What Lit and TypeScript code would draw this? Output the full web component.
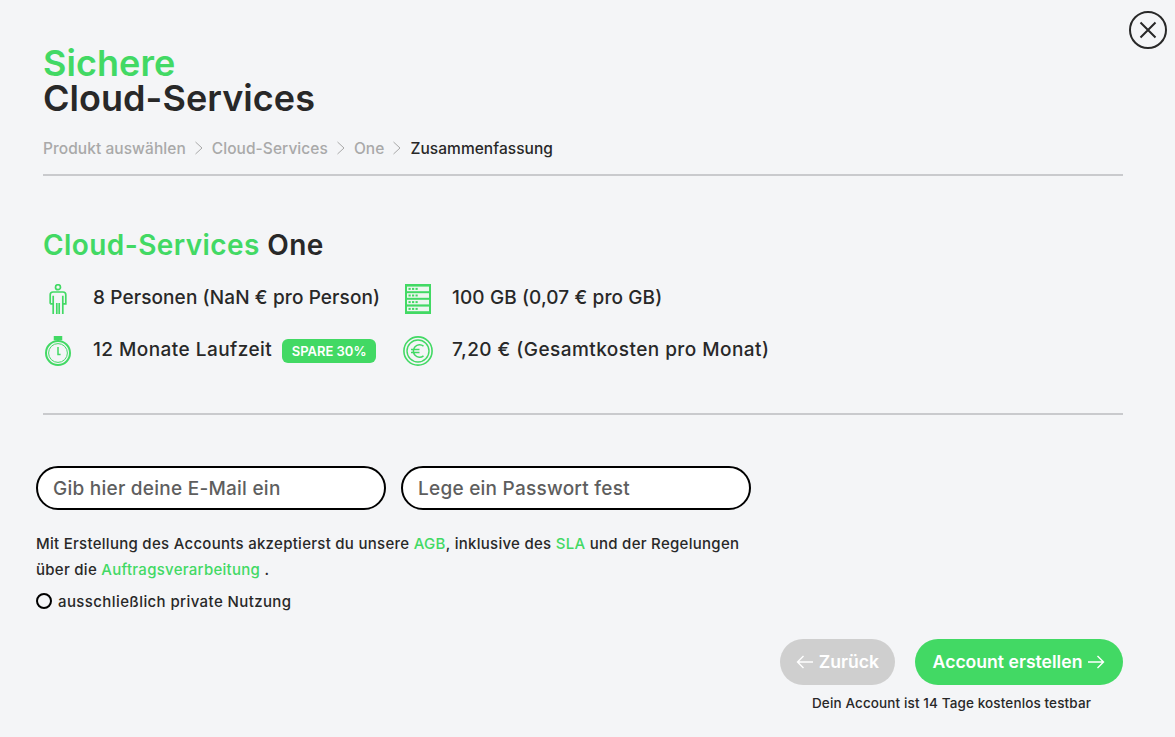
import { LitElement, html, svg, css } from "lit";
import { customElement } from "lit/decorators.js";

@customElement("app-root")
export class AppRoot extends LitElement {
  static styles = css`
    :host { display: block; width: 1175px; height: 737px; background: #f4f5f7; color: #282828; font-family: "Inter", "Noto Sans", sans-serif; overflow: hidden; position: relative; font-weight: 500; }
    .close { position: absolute; left: 1129px; top: 11px; width: 38px; height: 38px; }
    .page { display: flex; flex-direction: column; padding: 46px 52px 0 43px; }
    h1 { margin: 0; font-size: 36px; line-height: 35px; font-weight: 600; letter-spacing: 0.05px; }
    .g { color: #42d964; }
    .crumbs { display: flex; align-items: center; margin-top: 20px; height: 24px; font-size: 15.5px; letter-spacing: 0.06px; color: #a9a9a9; font-weight: 500; }
    .crumbs svg { width: 10px; height: 14px; margin: 0 8px; }
    .crumbs .cur { color: #282828; }
    hr { border: 0; height: 2px; background: #c9cacd; margin: 14px 0 0; width: 1080px; }
    h2 { margin: 51px 0 0; font-size: 28px; line-height: 36px; font-weight: 600; letter-spacing: 0.42px; }
    .facts { display: grid; grid-template-columns: 360px 1fr; row-gap: 16px; margin-top: 16px; font-size: 19px; letter-spacing: 0.11px; height: 88px; }
    .fact { display: flex; align-items: center; height: 36px; }
    .fact.loose { letter-spacing: 0.45px; }
    .fact svg { width: 30px; height: 30px; margin: 4px 20px 0 0; flex: none; }
    .fact.right svg { margin-right: 19px; }
    .badge { margin: 4px 0 0 10px; background: #42d964; color: #fff; font-size: 13px; font-weight: 600; letter-spacing: 0; padding: 0 9.5px; height: 24px; line-height: 24px; border-radius: 6px; }
    .sec { margin-top: 46px; }
    .inputs { display: flex; gap: 15px; margin: 51px 0 0 -7px; }
    .inp { width: 350px; height: 44px; box-sizing: border-box; border: 2px solid #000; border-radius: 22px; background: #fff; padding-left: 15px; font-size: 19px; letter-spacing: 0.25px; color: #5e5e5e; display: flex; align-items: center; }
    .legal { margin: 21px 0 0 -7px; font-size: 15px; letter-spacing: 0.28px; line-height: 26px; }
    .legal a { color: #42d964; }
    .radio { display: flex; align-items: center; gap: 6px; margin: 8px 0 0 -7px; font-size: 15px; letter-spacing: 0.4px; height: 20px; }
    .radio i { width: 12px; height: 12px; border: 2px solid #000; border-radius: 50%; display: block; }
    .foot { align-self: flex-end; display: flex; flex-direction: column; align-items: center; margin-top: 28px; width: 343px; }
    .btns { display: flex; gap: 20px; }
    .btn { height: 46px; box-sizing: border-box; padding-bottom: 1px; border-radius: 23px; color: #fff; font-size: 17.6px; font-weight: 600; display: flex; align-items: center; justify-content: center; gap: 5px; }
    .btn svg { width: 18px; height: 14px; }
    .back { width: 115px; background: #cfcfcf; }
    .go { width: 208px; background: #42d964; }
    .note { font-size: 13.5px; letter-spacing: 0.12px; margin-top: 10px; }
  `;
  render() {
    const chev = html`<svg viewBox="0 0 10 14" fill="none" stroke="#a9a9a9" stroke-width="1"><path d="M1.5 1l6.5 6-6.5 6"/></svg>`;
    const rows = [2.6, 9.2, 15.8, 22.6];
    return html`
      <svg class="close" viewBox="0 0 38 38" fill="none" stroke="#282828" stroke-width="2"><circle cx="19" cy="19" r="18"/><path d="M11.5 11.5l15 15M26.5 11.5l-15 15"/></svg>
      <div class="page">
        <h1><span class="g">Sichere</span><br>Cloud-Services</h1>
        <div class="crumbs"><span>Produkt auswählen</span>${chev}<span>Cloud-Services</span>${chev}<span>One</span>${chev}<span class="cur">Zusammenfassung</span></div>
        <hr>
        <h2><span class="g">Cloud-Services</span> One</h2>
        <div class="facts">
          <div class="fact"><svg viewBox="0 0 30 30" fill="none" stroke="#42d964" stroke-width="1.7"><circle cx="15" cy="3.2" r="2.5"/><path d="M10 8h10a2.8 2.8 0 0 1 2.8 2.8v9h-3v-8M7.2 19.8v-9A2.8 2.8 0 0 1 10 8M7.2 19.8h3v-8M10.2 13v17M13.8 19v11M16.2 19v11M19.8 13v17"/></svg>8 Personen (NaN € pro Person)</div>
          <div class="fact right"><svg viewBox="0 0 30 30"><rect x="2" y="0" width="26" height="30" fill="#42d964"/>${rows.map((y) => svg`<rect x="4" y=${y} width="22" height="4.6" fill="#eef6f0"/><rect x="5.5" y=${y + 1.3} width="2.2" height="2" fill="#42d964"/><rect x="9" y=${y + 1.3} width="2.2" height="2" fill="#42d964"/><rect x="12.5" y=${y + 1.3} width="2.2" height="2" fill="#42d964"/>`)}</svg>100 GB (0,07 € pro GB)</div>
          <div class="fact loose"><svg viewBox="0 0 30 30" fill="none" stroke="#42d964" stroke-width="1.5"><circle cx="15" cy="17" r="12" stroke-width="2"/><circle cx="15" cy="17" r="9.4" stroke-width="1"/><path d="M11.5 0.8h7v2.6h-7z" fill="#42d964"/><path d="M15 3.4v1.6M15 11v7.5h2.6"/></svg>12 Monate Laufzeit <span class="badge">SPARE 30%</span></div>
          <div class="fact right loose"><svg viewBox="0 0 30 30" fill="none" stroke="#42d964" stroke-width="1.5"><circle cx="15" cy="15" r="14.1" stroke-width="1.6"/><circle cx="15" cy="15" r="11" stroke-width="1.4"/><path d="M20.5 10.2a6.2 6.2 0 1 0 0 9.6M8 13.6h8.5M8 16.4h8.5"/></svg>7,20 € (Gesamtkosten pro Monat)</div>
        </div>
        <hr class="sec">
        <div class="inputs"><div class="inp">Gib hier deine E-Mail ein</div><div class="inp">Lege ein Passwort fest</div></div>
        <div class="legal">Mit Erstellung des Accounts akzeptierst du unsere <a>AGB</a>, inklusive des <a>SLA</a> und der Regelungen<br>über die <a>Auftragsverarbeitung</a> .</div>
        <div class="radio"><i></i>ausschließlich private Nutzung</div>
        <div class="foot">
          <div class="btns">
            <div class="btn back"><svg viewBox="0 0 18 14" fill="none" stroke="#fff" stroke-width="1.4"><path d="M17 7H1.5M7.5 1L1.5 7l6 6"/></svg>Zurück</div>
            <div class="btn go">Account erstellen<svg viewBox="0 0 18 14" fill="none" stroke="#fff" stroke-width="1.4"><path d="M1 7h15.5M10.5 1l6 6-6 6"/></svg></div>
          </div>
          <div class="note">Dein Account ist 14 Tage kostenlos testbar</div>
        </div>
      </div>`;
  }
}
